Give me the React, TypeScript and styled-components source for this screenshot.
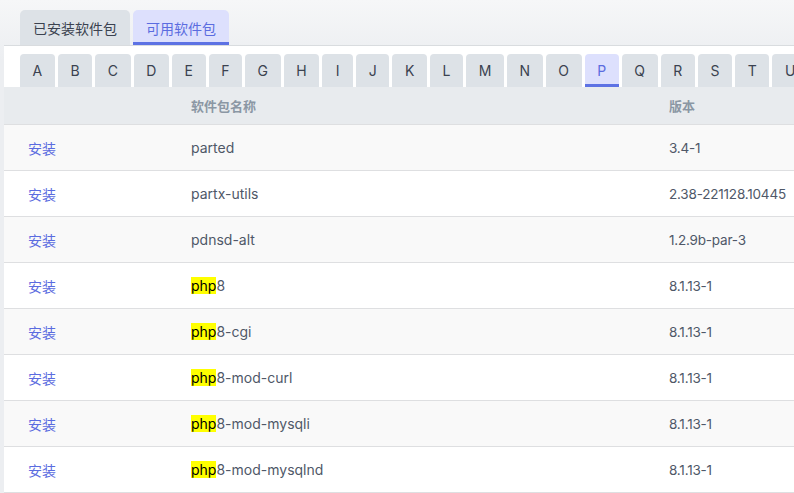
import React, { useState } from 'react'
import styled, { createGlobalStyle, css } from 'styled-components'

const GlobalStyle = createGlobalStyle`
    html, body {
        margin: 0;
        padding: 0;
        background: linear-gradient(#f6f7f8, #eceef1 60px);
        font-family: Inter, "Noto Sans CJK SC", sans-serif;
        overflow: hidden;
    }
    * {
        box-sizing: border-box;
    }
`

const Page = styled.div`
    width: 794px;
    height: 493px;
    overflow: hidden;
    padding-top: 10px;
`

const TabBar = styled.div`
    display: flex;
    gap: 3px;
    padding-left: 20px;
`

const Tab = styled.div<{ active?: boolean }>`
    height: 35px;
    padding: 0 13px;
    display: flex;
    align-items: center;
    border-radius: 5px 5px 0 0;
    background: #dde2e7;
    color: #3b4250;
    font-size: 14px;
    cursor: pointer;
    ${props => props.active && css`
        background: #dde0fd;
        color: #5b6ce0;
        border-bottom: 3px solid #5d72e4;
        padding-top: 3px;
    `};
`

const Panel = styled.div`
    margin-left: 4px;
    width: 1100px;
    background: #fff;
    border-top: 1px solid #d9dcdf;
`

const LetterBar = styled.div`
    display: flex;
    gap: 3px;
    padding: 8px 0 0 16px;
`

const Letter = styled.div<{ active?: boolean }>`
    flex-shrink: 0;
    height: 33px;
    padding: 0 12.6px;
    min-width: 31px;
    display: flex;
    align-items: center;
    justify-content: center;
    border-radius: 4px 4px 0 0;
    background: #dde2e7;
    color: #3b4250;
    font-size: 14px;
    cursor: pointer;
    ${props => props.active && css`
        background: #dde0fd;
        color: #5b6ce0;
        border-bottom: 3px solid #5d72e4;
        padding-top: 3px;
    `};
`

const Row = styled.div<{ head?: boolean, shade?: boolean }>`
    display: grid;
    grid-template-columns: 183px 478px 1fr;
    align-items: center;
    height: 46px;
    border-bottom: 1px solid #dedfe1;
    background: ${props => props.shade ? '#f9f9f9' : '#fff'};
    color: #4f5868;
    font-size: 14px;
    ${props => props.head && css`
        height: 38px;
        background: #e8ebee;
        color: #8b97a4;
        font-size: 13px;
        font-weight: 600;
    `};
`

const Cell = styled.div`
    padding-left: 4px;
    white-space: nowrap;
`

const VersionCell = styled(Cell)`
    font-size: 13.5px;
    letter-spacing: -0.2px;
`

const ActionCell = styled(Cell)`
    padding-left: 24px;
`

const InstallLink = styled.a`
    color: #5b6ce0;
    font-size: 14px;
    text-decoration: none;
    cursor: pointer;
`

const Mark = styled.mark`
    background: #ffff00;
    color: #000;
`

const LETTERS = 'ABCDEFGHIJKLMNOPQRSTUVWXYZ'.split('')

const PACKAGES = [
    { name: 'parted', version: '3.4-1' },
    { name: 'partx-utils', version: '2.38-221128.10445' },
    { name: 'pdnsd-alt', version: '1.2.9b-par-3' },
    { name: 'php8', version: '8.1.13-1' },
    { name: 'php8-cgi', version: '8.1.13-1' },
    { name: 'php8-mod-curl', version: '8.1.13-1' },
    { name: 'php8-mod-mysqli', version: '8.1.13-1' },
    { name: 'php8-mod-mysqlnd', version: '8.1.13-1' },
    { name: 'php8-mod-opcache', version: '8.1.13-1' },
]

const highlight = (name: string, q: string) => {
    if (!name.startsWith(q)) return name
    return <><Mark>{q}</Mark>{name.slice(q.length)}</>
}

const App = () => {
    const [tab, setTab] = useState(1)
    const [letter, setLetter] = useState('P')
    return (
        <Page>
            <GlobalStyle />
            <TabBar>
                {['已安装软件包', '可用软件包'].map((t, i) => (
                    <Tab key={t} active={tab === i} onClick={() => setTab(i)}>{t}</Tab>
                ))}
            </TabBar>
            <Panel>
                <LetterBar>
                    {LETTERS.map(l => (
                        <Letter key={l} active={letter === l} onClick={() => setLetter(l)}>{l}</Letter>
                    ))}
                </LetterBar>
                <Row head>
                    <ActionCell></ActionCell>
                    <Cell>软件包名称</Cell>
                    <Cell>版本</Cell>
                </Row>
                {PACKAGES.map((p, i) => (
                    <Row key={p.name} shade={i % 2 === 0}>
                        <ActionCell><InstallLink>安装</InstallLink></ActionCell>
                        <Cell>{highlight(p.name, 'php')}</Cell>
                        <VersionCell>{p.version}</VersionCell>
                    </Row>
                ))}
            </Panel>
        </Page>
    )
}

export default App
